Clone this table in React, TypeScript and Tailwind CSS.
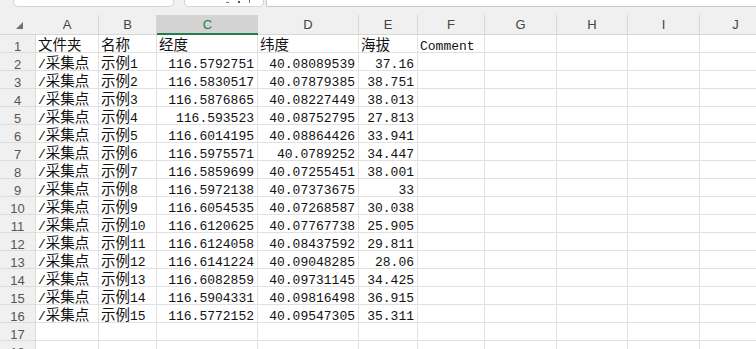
import React from "react";

type Row = [string, string, string, string, string, string];

const cols = ["A", "B", "C", "D", "E", "F", "G", "H", "I", "J"];

const data: Row[] = [
  ["文件夹", "名称", "经度", "纬度", "海拔", "Comment"],
  ["/采集点", "示例1", "116.5792751", "40.08089539", "37.16", ""],
  ["/采集点", "示例2", "116.5830517", "40.07879385", "38.751", ""],
  ["/采集点", "示例3", "116.5876865", "40.08227449", "38.013", ""],
  ["/采集点", "示例4", "116.593523", "40.08752795", "27.813", ""],
  ["/采集点", "示例5", "116.6014195", "40.08864426", "33.941", ""],
  ["/采集点", "示例6", "116.5975571", "40.0789252", "34.447", ""],
  ["/采集点", "示例7", "116.5859699", "40.07255451", "38.001", ""],
  ["/采集点", "示例8", "116.5972138", "40.07373675", "33", ""],
  ["/采集点", "示例9", "116.6054535", "40.07268587", "30.038", ""],
  ["/采集点", "示例10", "116.6120625", "40.07767738", "25.905", ""],
  ["/采集点", "示例11", "116.6124058", "40.08437592", "29.811", ""],
  ["/采集点", "示例12", "116.6141224", "40.09048285", "28.06", ""],
  ["/采集点", "示例13", "116.6082859", "40.09731145", "34.425", ""],
  ["/采集点", "示例14", "116.5904331", "40.09816498", "36.915", ""],
  ["/采集点", "示例15", "116.5772152", "40.09547305", "35.311", ""],
  ["", "", "", "", "", ""],
  ["", "", "", "", "", ""],
];

// split text so CJK runs get the wider glyph size
function CellText({ text }: { text: string }) {
  const parts = text.split(/([\u4e00-\u9fff]+)/).filter(Boolean);
  return (
    <span className="whitespace-nowrap">
      {parts.map((p, i) =>
        /[\u4e00-\u9fff]/.test(p) ? (
          <span key={i} className="text-[14.5px]">
            {p}
          </span>
        ) : (
          <span key={i}>{p}</span>
        )
      )}
    </span>
  );
}

const isNum = (s: string) => /^[\d.]+$/.test(s);

export default function App() {
  return (
    <div className="h-[349px] w-[756px] overflow-hidden bg-[#f0f0f0] font-['Liberation_Sans',sans-serif]">
      {/* formula bar remnants */}
      <div className="flex h-[15px] items-start">
        <div className="ml-[13px] -mt-[10px] h-[17px] w-[161px] rounded-b-[5px] border border-[#d4d4d4] bg-white" />
        <div className="ml-[10px] -mt-[10px] flex h-[17px] w-[80px] items-end gap-[9px] rounded-b-[5px] border border-[#d4d4d4] bg-white pb-[3px] pl-[41px]">
          <span className="h-[1px] w-[3px] bg-[#777]" />
          <span className="h-[2px] w-[2px] bg-[#555]" />
          <span className="h-[3px] w-[1px] bg-[#777]" />
        </div>
        <div className="ml-[2px] -mt-[10px] h-[17px] flex-1 border-b border-l border-[#c8c8c8] bg-white" />
      </div>

      <div className="grid grid-cols-[36px_63px_58px_101px_101px_59px_67px_72px_71px_72px_72px] grid-rows-[20px] auto-rows-[18px] bg-white text-[13px]">
        {/* header row */}
        <div className="flex items-center justify-end border-b border-[#d6d6d6] bg-[#f0f0f0] pr-[13px] pt-[2px]">
          <svg width="7" height="7" viewBox="0 0 7 7">
            <polygon points="7,0 7,7 0,7" fill="#707070" />
          </svg>
        </div>
        {cols.map((c) => (
          <div
            key={c}
            className={
              c === "C"
                ? "flex items-center justify-center border-b-2 border-[#1e7f4e] bg-[#d3d3d3] pt-[2px] text-[#1e7f4e]"
                : "flex items-center justify-center border-b border-r border-[#d6d6d6] bg-[#f0f0f0] pt-[1px] text-[#444]"
            }
          >
            {c}
          </div>
        ))}

        {data.map((row, r) => (
          <React.Fragment key={r}>
            <div className="flex items-center justify-center border-b border-r border-[#dcdcdc] bg-[#f0f0f0] pt-[6px] text-[#555]">
              {r + 1}
            </div>
            {row.map((v, ci) => (
              <div
                key={ci}
                className={
                  isNum(v)
                    ? "flex items-center justify-end overflow-hidden border-b border-r border-[#e1e1e1] pr-[3px] pt-[6px] font-['Liberation_Mono','Noto_Sans_CJK_SC',monospace] text-[#111]"
                    : "flex items-center overflow-hidden border-b border-r border-[#e1e1e1] pl-[2px] pt-[6px] font-['Liberation_Mono','Noto_Sans_CJK_SC',monospace] text-[#111]"
                }
              >
                <CellText text={v} />
              </div>
            ))}
            {[0, 1, 2, 3].map((k) => (
              <div key={"e" + k} className="border-b border-r border-[#e1e1e1]" />
            ))}
          </React.Fragment>
        ))}
      </div>
    </div>
  );
}
